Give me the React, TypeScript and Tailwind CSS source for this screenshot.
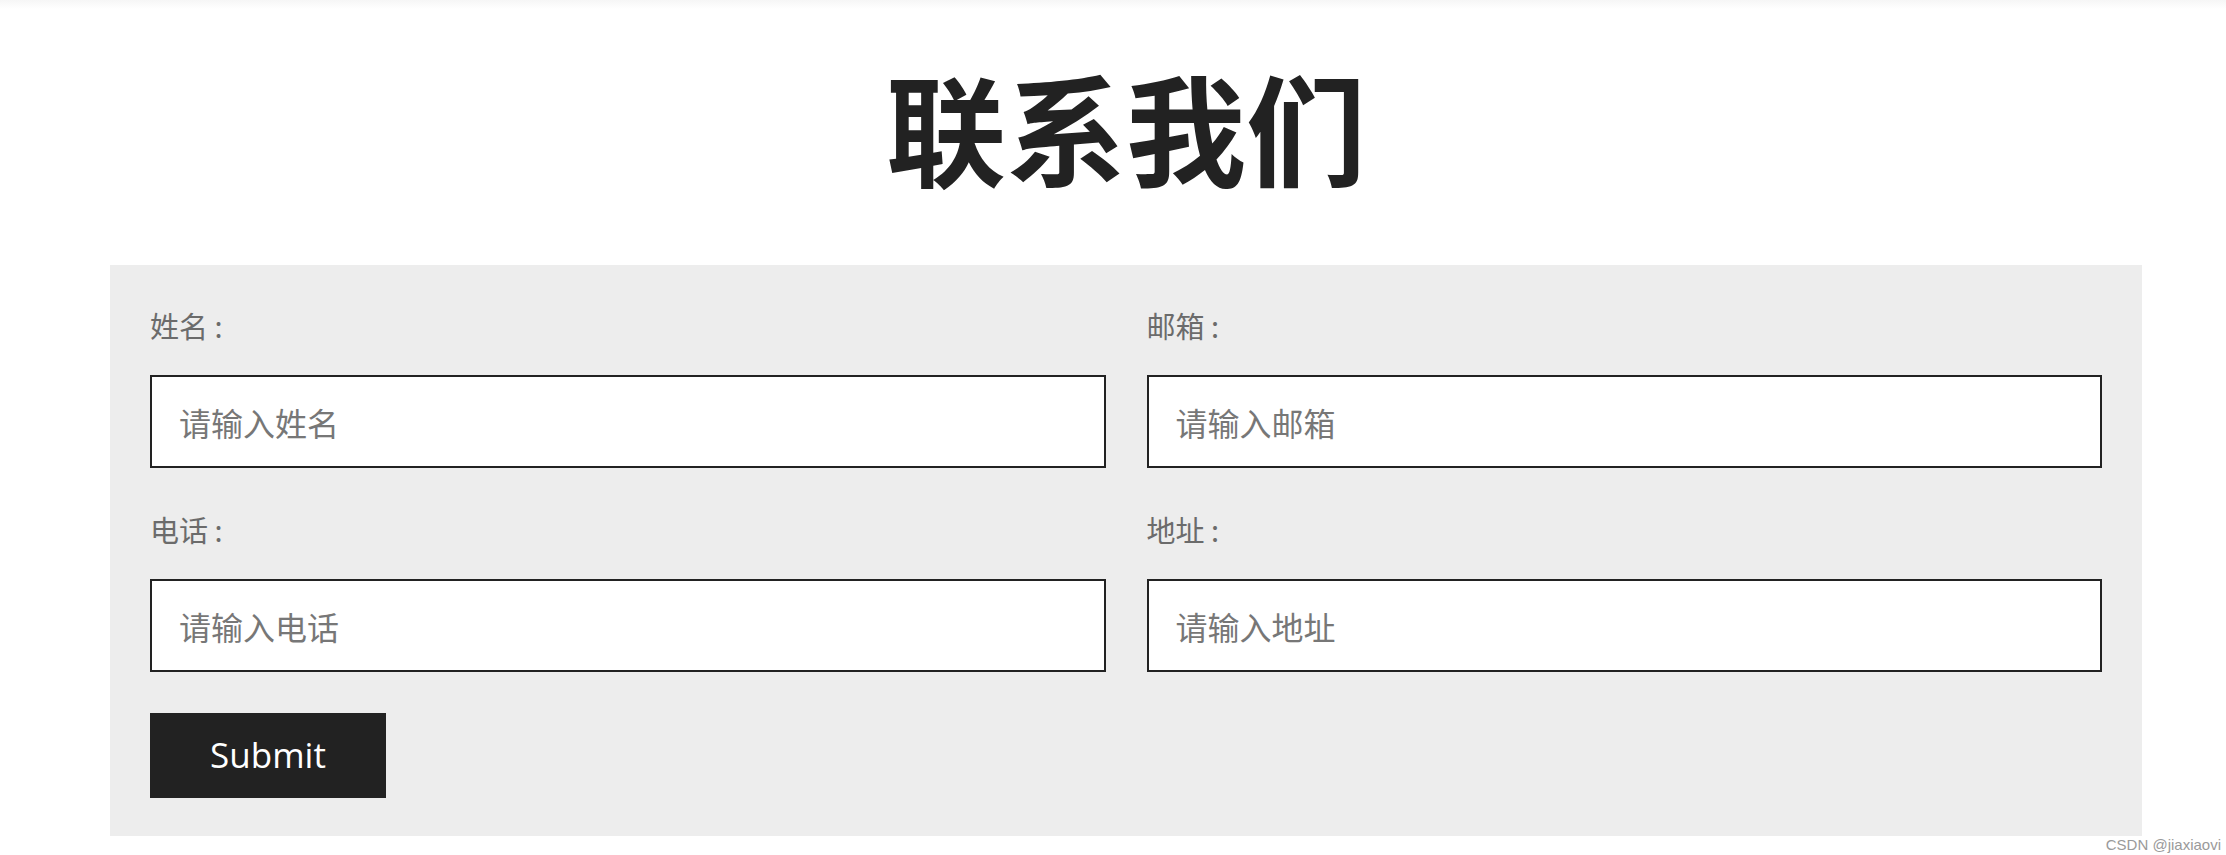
const fields = [
    { label: "姓名 :", placeholder: "请输入姓名" },
    { label: "邮箱 :", placeholder: "请输入邮箱" },
    { label: "电话 :", placeholder: "请输入电话" },
    { label: "地址 :", placeholder: "请输入地址" },
];

export default function App() {
    return (
        <div
            className="relative h-[855px] w-full bg-white"
            style={{ fontFamily: '"Noto Sans CJK SC", "Noto Sans", sans-serif' }}
        >
            <div className="h-[9px] w-full bg-gradient-to-b from-[#f6f6f6] to-white"></div>

            <div className="ml-[110px] mr-[84px]">
                <h1 className="mt-[45px] text-center text-[120px] leading-[144px] font-bold text-[#222]">
                    联系我们
                </h1>

                <form className="mt-[67px] bg-[#ededed] px-[40px] pt-[40px] pb-[38px]">
                    <div className="grid grid-cols-2 gap-x-[41px] gap-y-[41px]">
                        {fields.map((f) => (
                            <div key={f.label} className="flex flex-col">
                                <label className="h-[44px] text-[29px] leading-[40px] text-[#6b6b6b]">
                                    {f.label}
                                </label>
                                <input
                                    type="text"
                                    placeholder={f.placeholder}
                                    className="mt-[26px] h-[93px] w-full border-2 border-[#222] bg-white pl-[27px] text-[32px] outline-none placeholder:text-[#777]"
                                />
                            </div>
                        ))}
                    </div>

                    <button
                        type="button"
                        className="mt-[41px] h-[85px] w-[236px] bg-[#222] text-[35px] text-white"
                        style={{ fontFamily: '"Open Sans", "Noto Sans", sans-serif' }}
                    >
                        Submit
                    </button>
                </form>
            </div>

            <span
                className="absolute right-[5px] bottom-[1px] text-[15px] leading-[18px] text-[#9a9a9a]"
                style={{ fontFamily: '"Liberation Sans", Arial, sans-serif' }}
            >
                CSDN @jiaxiaovi
            </span>
        </div>
    );
}
